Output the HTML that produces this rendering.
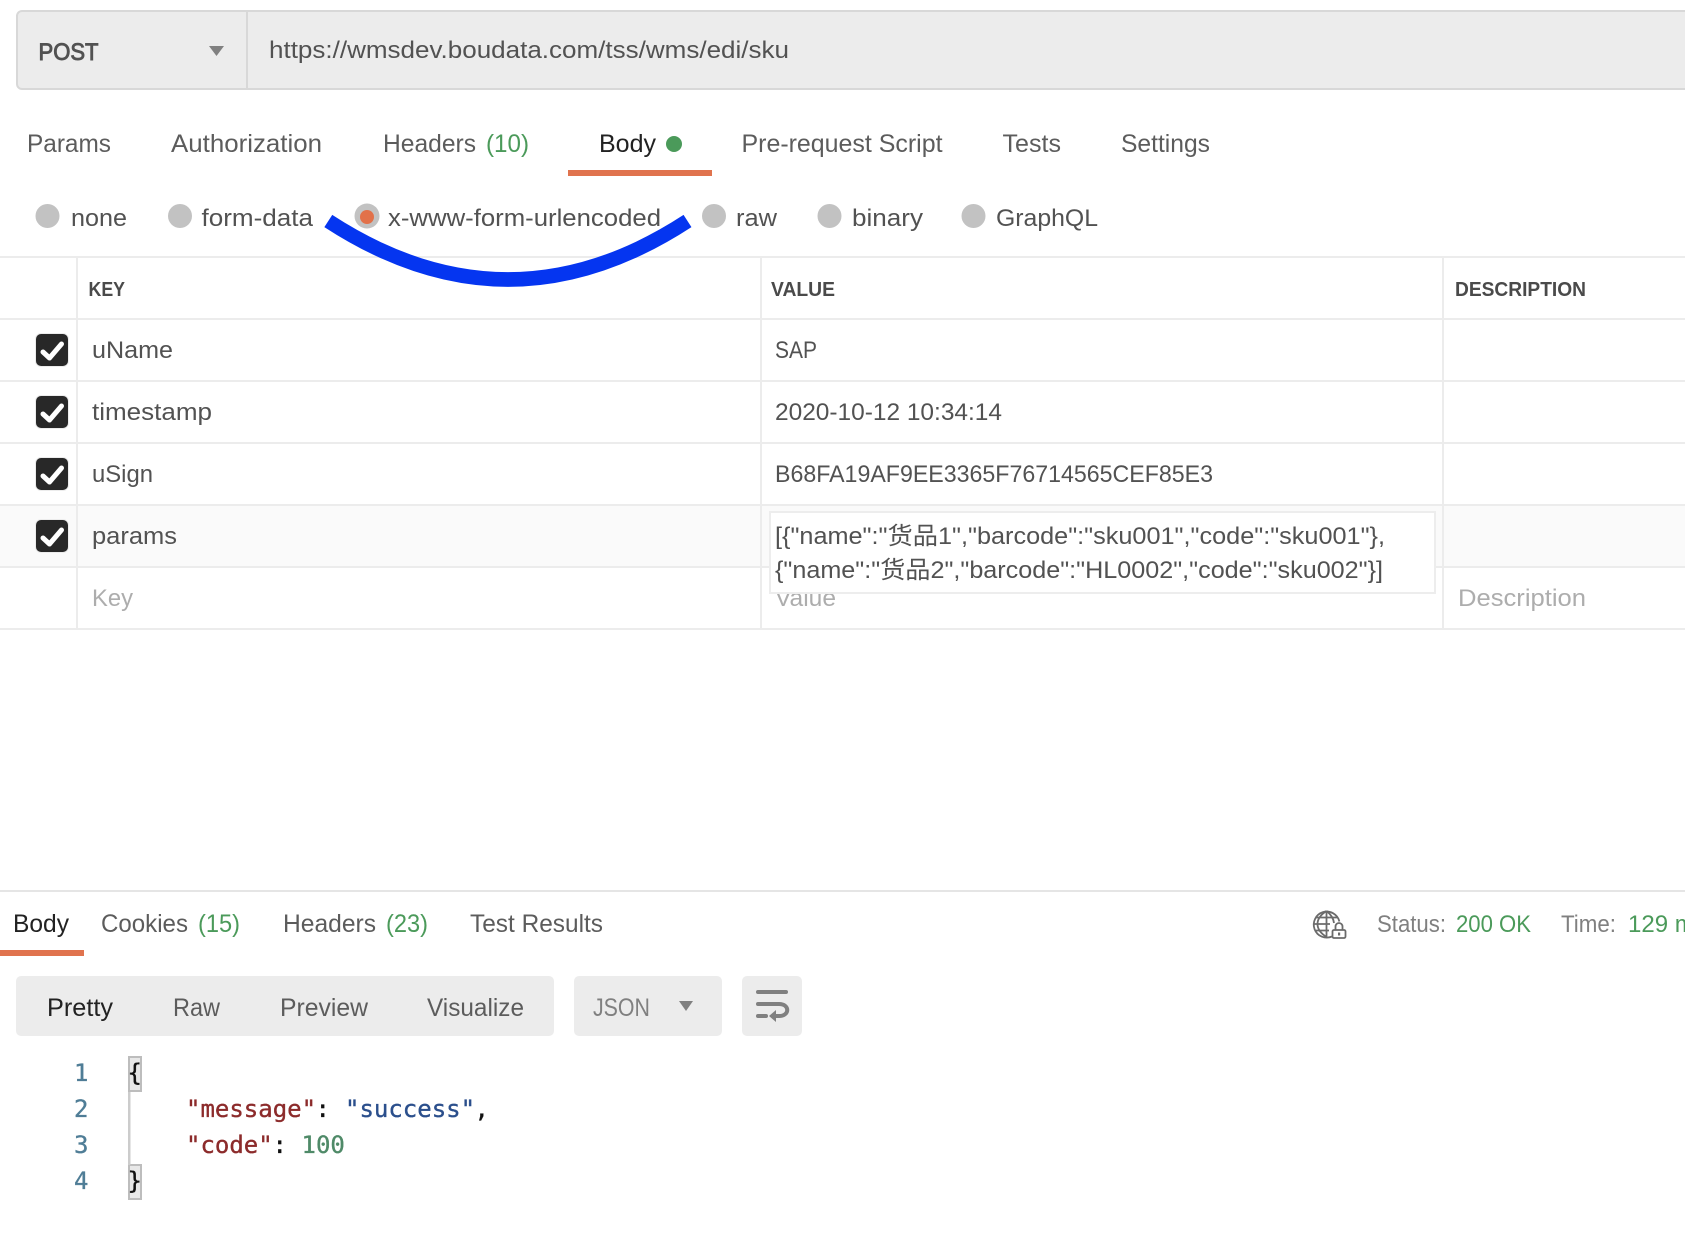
<!DOCTYPE html>
<html lang="zh"><head><meta charset="utf-8"><title>Postman request</title>
<style>
html,body{margin:0;padding:0;background:#fff;width:1685px;height:1245px;overflow:hidden}
svg{display:block}
text{font-family:"Liberation Sans","Noto Sans CJK SC",sans-serif;font-size:24px;fill:#525252;white-space:pre}
.t{font-size:25px;fill:#5c5c5c}
.h{font-size:20px;font-weight:bold;fill:#4a4a4a}
.p{fill:#adadad}
.m{font-family:"DejaVu Sans Mono","Liberation Mono",monospace;font-size:24px;stroke-width:.35px}
.s{font-size:24px;fill:#808080}
.g{fill:#4b9a5a}
.a{fill:#222}
</style></head><body>
<svg xmlns="http://www.w3.org/2000/svg" width="1685" height="1245" viewBox="0 0 1685 1245">
<!-- URL bar -->
<rect x="17" y="11" width="1700" height="78" rx="5" fill="#ececec" stroke="#d8d8d8" stroke-width="2"/>
<rect x="246" y="11" width="2" height="78" fill="#d8d8d8"/>
<text x="38.5" y="60" textLength="60" lengthAdjust="spacingAndGlyphs" stroke="#525252" stroke-width=".9">POST</text>
<path d="M209 46H224L216.500 56Z" fill="#808080"/>
<text x="269" y="58" textLength="520" lengthAdjust="spacingAndGlyphs">https://wmsdev.boudata.com/tss/wms/edi/sku</text>

<!-- Tabs -->
<text class="t" x="27" y="152" textLength="84" lengthAdjust="spacingAndGlyphs">Params</text>
<text class="t" x="171" y="152" textLength="151" lengthAdjust="spacingAndGlyphs">Authorization</text>
<text class="t" x="383" y="152" textLength="93" lengthAdjust="spacingAndGlyphs">Headers</text>
<text class="t g" x="486" y="152" textLength="43" lengthAdjust="spacingAndGlyphs">(10)</text>
<text class="t a" x="599" y="152" textLength="57" lengthAdjust="spacingAndGlyphs">Body</text>
<circle cx="674" cy="144" r="8" fill="#4b9a5a"/>
<rect x="568" y="170" width="144" height="6" fill="#e0734e"/>
<text class="t" x="741.5" y="152" textLength="201" lengthAdjust="spacingAndGlyphs">Pre-request Script</text>
<text class="t" x="1002.5" y="152" textLength="58.5" lengthAdjust="spacingAndGlyphs">Tests</text>
<text class="t" x="1121" y="152" textLength="89" lengthAdjust="spacingAndGlyphs">Settings</text>

<!-- Radios -->
<g fill="#c2c2c2">
<circle cx="47.5" cy="216" r="12"/><circle cx="180" cy="216" r="12"/><circle cx="367" cy="216" r="12.500"/>
<circle cx="714" cy="216" r="12"/><circle cx="829.5" cy="216" r="12"/><circle cx="973.5" cy="216" r="12"/>
</g>
<circle cx="367" cy="217" r="7" fill="#e2714a"/>
<text x="71" y="226" textLength="56" lengthAdjust="spacingAndGlyphs">none</text>
<text x="201.5" y="226" textLength="111.5" lengthAdjust="spacingAndGlyphs">form-data</text>
<text x="388" y="226" textLength="273" lengthAdjust="spacingAndGlyphs">x-www-form-urlencoded</text>
<text x="736" y="226" textLength="41" lengthAdjust="spacingAndGlyphs">raw</text>
<text x="852" y="226" textLength="71" lengthAdjust="spacingAndGlyphs">binary</text>
<text x="996" y="226" textLength="102" lengthAdjust="spacingAndGlyphs">GraphQL</text>

<!-- Table -->
<rect x="0" y="505" width="1685" height="62" fill="#fafafa"/>
<g fill="#ececec">
<rect x="0" y="256" width="1685" height="2"/><rect x="0" y="318" width="1685" height="2"/>
<rect x="0" y="380" width="1685" height="2"/><rect x="0" y="442" width="1685" height="2"/>
<rect x="0" y="504" width="1685" height="2"/><rect x="0" y="566" width="1685" height="2"/>
<rect x="0" y="628" width="1685" height="2"/>
<rect x="76" y="256" width="2" height="374"/><rect x="760" y="256" width="2" height="374"/><rect x="1442" y="256" width="2" height="374"/>
</g>
<text class="h" x="88.5" y="296" textLength="36.5" lengthAdjust="spacingAndGlyphs">KEY</text>
<text class="h" x="771" y="296" textLength="64" lengthAdjust="spacingAndGlyphs">VALUE</text>
<text class="h" x="1455" y="296" textLength="131" lengthAdjust="spacingAndGlyphs">DESCRIPTION</text>

<g>
<rect x="35" y="333" width="34" height="34" rx="6" fill="#ececec"/>
<rect x="36" y="334" width="32" height="32" rx="5" fill="#282828"/>
<path d="M43 352L49.500 358L61.500 344" fill="none" stroke="#fff" stroke-width="5" stroke-linecap="round" stroke-linejoin="round"/>
</g>
<g transform="translate(0 62)"><rect x="35" y="333" width="34" height="34" rx="6" fill="#ececec"/><rect x="36" y="334" width="32" height="32" rx="5" fill="#282828"/><path d="M43 352L49.500 358L61.500 344" fill="none" stroke="#fff" stroke-width="5" stroke-linecap="round" stroke-linejoin="round"/></g>
<g transform="translate(0 124)"><rect x="35" y="333" width="34" height="34" rx="6" fill="#ececec"/><rect x="36" y="334" width="32" height="32" rx="5" fill="#282828"/><path d="M43 352L49.500 358L61.500 344" fill="none" stroke="#fff" stroke-width="5" stroke-linecap="round" stroke-linejoin="round"/></g>
<g transform="translate(0 186)"><rect x="35" y="333" width="34" height="34" rx="6" fill="#ececec"/><rect x="36" y="334" width="32" height="32" rx="5" fill="#282828"/><path d="M43 352L49.500 358L61.500 344" fill="none" stroke="#fff" stroke-width="5" stroke-linecap="round" stroke-linejoin="round"/></g>

<text x="92" y="358" textLength="81" lengthAdjust="spacingAndGlyphs">uName</text>
<text x="92" y="420" textLength="120" lengthAdjust="spacingAndGlyphs">timestamp</text>
<text x="92" y="482" textLength="61" lengthAdjust="spacingAndGlyphs">uSign</text>
<text x="92" y="544" textLength="85" lengthAdjust="spacingAndGlyphs">params</text>
<text class="p" x="92" y="606" textLength="41" lengthAdjust="spacingAndGlyphs">Key</text>
<text x="775" y="358" textLength="42" lengthAdjust="spacingAndGlyphs">SAP</text>
<text x="775" y="420" textLength="227" lengthAdjust="spacingAndGlyphs">2020-10-12 10:34:14</text>
<text x="775" y="482" textLength="438" lengthAdjust="spacingAndGlyphs">B68FA19AF9EE3365F76714565CEF85E3</text>
<text class="p" x="775" y="606" textLength="61" lengthAdjust="spacingAndGlyphs">Value</text>
<text class="p" x="1458" y="606" textLength="128" lengthAdjust="spacingAndGlyphs">Description</text>

<!-- Expanded value -->
<rect x="770" y="512" width="665" height="81" fill="#fff" stroke="#ededed" stroke-width="2"/>
<text x="775" y="544" textLength="610" lengthAdjust="spacingAndGlyphs">[{"name":"货品1","barcode":"sku001","code":"sku001"},</text>
<text x="775" y="578" textLength="608" lengthAdjust="spacingAndGlyphs">{"name":"货品2","barcode":"HL0002","code":"sku002"}]</text>

<!-- Blue annotation -->
<path d="M328.3 221Q508 338 687.500 221" fill="none" stroke="#0535f0" stroke-width="14.500"/>

<!-- Response -->
<rect x="0" y="890" width="1685" height="2" fill="#e5e5e5"/>
<text class="t a" x="13" y="932" textLength="56" lengthAdjust="spacingAndGlyphs">Body</text>
<text class="t" x="101" y="932" textLength="87" lengthAdjust="spacingAndGlyphs">Cookies</text>
<text class="t g" x="198" y="932" textLength="42" lengthAdjust="spacingAndGlyphs">(15)</text>
<text class="t" x="283" y="932" textLength="93" lengthAdjust="spacingAndGlyphs">Headers</text>
<text class="t g" x="386" y="932" textLength="42" lengthAdjust="spacingAndGlyphs">(23)</text>
<text class="t" x="470" y="932" textLength="133" lengthAdjust="spacingAndGlyphs">Test Results</text>
<rect x="0" y="950" width="84" height="6" fill="#e0734e"/>

<!-- Globe + lock -->
<g fill="none" stroke="#6b6b6b" stroke-width="1.8">
<path d="M1332 936.500A13 13 0 1 1 1339.400 921.500"/>
<path d="M1326.500 911C1319.500 915.500 1317.500 920 1317.500 924C1317.500 928 1319.500 932.500 1326.500 937"/>
<path d="M1326.500 911C1331 914.500 1333.500 918.500 1334 923"/>
<path d="M1326.500 911V937"/>
<path d="M1316 917.500H1337M1314.500 924H1330M1316 930.500H1329"/>
<rect x="1332.500" y="930" width="13" height="8" rx="1.500" fill="#fff"/>
<path d="M1335.500 930V926.500A3.500 3.500 0 0 1 1342.500 926.500V930"/>
</g>
<rect x="1338" y="932.500" width="2.200" height="3" fill="#6b6b6b"/>
<text class="s" x="1377" y="932" textLength="69" lengthAdjust="spacingAndGlyphs">Status:</text>
<text class="s g" x="1456" y="932" textLength="75" lengthAdjust="spacingAndGlyphs">200 OK</text>
<text class="s" x="1561" y="932" textLength="55" lengthAdjust="spacingAndGlyphs">Time:</text>
<text class="s g" x="1628" y="932">129 ms</text>

<!-- Response toolbar -->
<rect x="16" y="976" width="538" height="60" rx="5" fill="#ececec"/>
<rect x="574" y="976" width="148" height="60" rx="5" fill="#ececec"/>
<rect x="742" y="976" width="60" height="60" rx="5" fill="#ececec"/>
<text class="a" x="47" y="1016" textLength="66" lengthAdjust="spacingAndGlyphs" style="font-size:25px">Pretty</text>
<text class="t" x="173" y="1016" textLength="47" lengthAdjust="spacingAndGlyphs">Raw</text>
<text class="t" x="280" y="1016" textLength="88" lengthAdjust="spacingAndGlyphs">Preview</text>
<text class="t" x="427" y="1016" textLength="97" lengthAdjust="spacingAndGlyphs">Visualize</text>
<text class="t" x="593" y="1016" textLength="57" lengthAdjust="spacingAndGlyphs" style="fill:#808080">JSON</text>
<path d="M679 1001H693L686 1011Z" fill="#808080"/>
<g fill="none" stroke="#808080" stroke-width="4" stroke-linecap="round">
<path d="M758 992H786"/>
<path d="M758 1004H779C790 1004 790 1016 779 1016H774"/>
<path d="M758 1016H766"/>
</g>
<path d="M776 1010L769 1016L776 1022Z" fill="#808080"/>

<!-- Code -->
<rect x="129" y="1057" width="12" height="34" fill="#e8e8e8" stroke="#bdbdbd" stroke-width="2"/>
<rect x="129" y="1165" width="12" height="34" fill="#e8e8e8" stroke="#bdbdbd" stroke-width="2"/>
<rect x="128" y="1092" width="2.500" height="73" fill="#cccccc"/>
<text class="m" x="74" y="1081" style="fill:#4f7d96;stroke:#4f7d96">1</text>
<text class="m" x="74" y="1117" style="fill:#4f7d96;stroke:#4f7d96">2</text>
<text class="m" x="74" y="1153" style="fill:#4f7d96;stroke:#4f7d96">3</text>
<text class="m" x="74" y="1189" style="fill:#4f7d96;stroke:#4f7d96">4</text>
<text class="m" x="127.500" y="1081" style="fill:#111;stroke:#111">{</text>
<text class="m" x="127.500" y="1189" style="fill:#111;stroke:#111">}</text>
<text class="m" x="186" y="1117" style="fill:#8c2b2b;stroke:#8c2b2b">"message"</text>
<text class="m" x="315.500" y="1117" style="fill:#111;stroke:#111">:</text>
<text class="m" x="345" y="1117" style="fill:#2b4f8c;stroke:#2b4f8c">"success"</text>
<text class="m" x="474.500" y="1117" style="fill:#111;stroke:#111">,</text>
<text class="m" x="186" y="1153" style="fill:#8c2b2b;stroke:#8c2b2b">"code"</text>
<text class="m" x="272.500" y="1153" style="fill:#111;stroke:#111">:</text>
<text class="m" x="301.500" y="1153" style="fill:#4f8a68;stroke:#4f8a68">100</text>
</svg>
</body></html>
